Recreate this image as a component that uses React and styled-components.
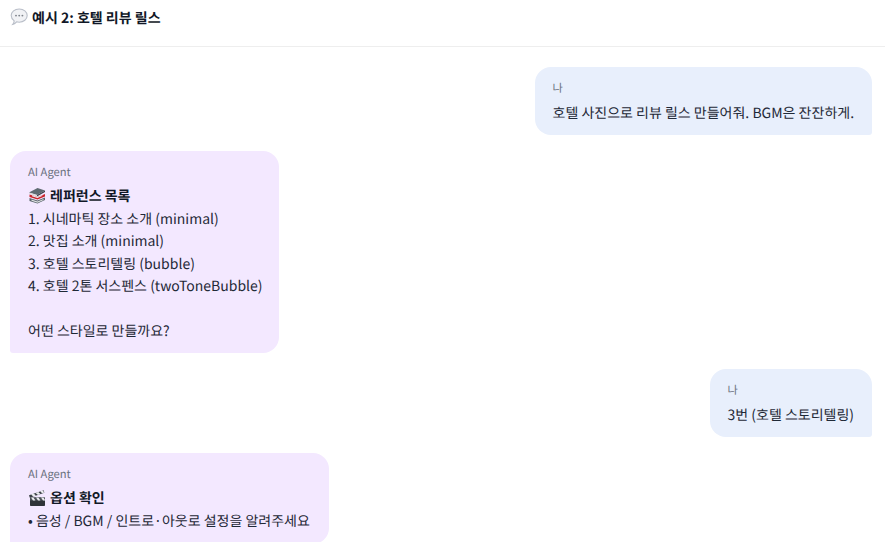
import React from "react";
import styled, { createGlobalStyle } from "styled-components";

const Global = createGlobalStyle`
  html, body { margin: 0; padding: 0; background: #fff; height: 100%; overflow: hidden; }
  body {
    font-family: "Noto Sans CJK KR", "Noto Sans", sans-serif;
    color: #1f2937;
    text-rendering: geometricPrecision;
  }
`;

const Page = styled.div`
  width: 885px;
  height: 542px;
  overflow: hidden;
`;

const Header = styled.header`
  box-sizing: content-box;
  border-bottom: 1px solid #eeeeee;
  padding: 8px 10px 0;
  height: 38px;
  font-size: 14px;
  font-weight: 700;
  line-height: 20px;
  color: #111827;
  display: flex;
  align-items: flex-start;
  gap: 4px;
`;

const Thread = styled.main`
  display: flex;
  flex-direction: column;
  gap: 16px;
  padding: 20px 13px 0 10px;
`;

const Bubble = styled.div`
  box-sizing: border-box;
  width: ${(p) => p.$width}px;
  align-self: ${(p) => (p.$mine ? "flex-end" : "flex-start")};
  background: ${(p) => (p.$mine ? "#e8effc" : "#f3e8ff")};
  border-radius: ${(p) => (p.$mine ? "16px 16px 3px 16px" : "16px 16px 16px 3px")};
  padding: 13px 0 11px ${(p) => (p.$mine ? "17.5px" : "18px")};
  font-size: 14px;
  line-height: 22.4px;
  color: #1f2937;
`;

const Sender = styled.div`
  font-size: 11.2px;
  line-height: 17.6px;
  color: #6b7280;
  margin-bottom: 4px;
`;

const Title = styled.div`
  font-weight: 700;
  color: #111827;
  display: flex;
  align-items: center;
  gap: 4px;
  margin: -1px 0 1px;
`;

const Line = styled.div`
  white-space: pre;
  min-height: 22.4px;
`;

const EmojiSvg = styled.svg`
  width: 18px;
  height: 18px;
  flex: none;
  display: block;
`;

const SpeechEmoji = () => (
  <EmojiSvg viewBox="0 0 18 18" aria-hidden="true">
    <path d="M9.2 1c4.5 0 8 2.900 8 6.600s-3.500 6.600-8 6.600c-.9 0-1.800-.1-2.600-.4-.8 1-2.100 2.200-3.800 2.600.8-.9 1.300-2.100 1.400-3.500C2.300 11.500 1.200 9.700 1.200 7.600 1.200 3.900 4.700 1 9.200 1z" fill="#f1f2f5" stroke="#b9bec8" strokeWidth="1.1" />
    <circle cx="6" cy="7.600" r=".95" fill="#7f848c" />
    <circle cx="9.200" cy="7.600" r=".95" fill="#7f848c" />
    <circle cx="12.400" cy="7.600" r=".95" fill="#7f848c" />
  </EmojiSvg>
);

const BooksEmoji = () => (
  <EmojiSvg viewBox="0 0 18 18" aria-hidden="true">
    <path d="M1 5.500 9.500 1l7.500 2.500-8 4.500z" fill="#5f6b72" />
    <path d="M1 5.500 9 8v1.500L1.500 7z" fill="#d8dbdd" />
    <path d="M9 8l8-4.500v1.600L9 9.500z" fill="#3d474d" />
    <path d="M1.500 7.500 9.500 10l7.500-3v2.400L9.500 12.600 1.500 10z" fill="#c9242b" />
    <path d="M4 8.300 9.500 10l5-2-.4 1-4.700 1.900-5.400-1.700z" fill="#f1f1ef" />
    <path d="M1.500 11 9.500 13.600l7.500-3.200V13l-7.500 3.600L1.500 14z" fill="#59646b" />
    <path d="M3.500 12.600l6 2 6-2.700v1l-6 2.800-6-2z" fill="#dfe2e3" />
  </EmojiSvg>
);

const ClapperEmoji = () => (
  <EmojiSvg viewBox="0 0 18 18" aria-hidden="true">
    <rect x="2" y="8.500" width="15" height="8.500" rx=".8" fill="#2f3338" />
    <path d="M2 8.500h15v3H2z" fill="#4b5056" />
    <path d="M3 8.500h2.400l2 3H5zM8 8.500h2.400l2 3H10zM13 8.500h2.400l1.600 2.500v.5h-2z" fill="#eceef0" />
    <path d="M1 6.200 15.600 1.200l.8 2.600L1.800 8.800z" fill="#3a3f45" />
    <path d="M3 5.500l2.600-.9 2.300 2-2.500.9zM7.600 4l2.600-.9 2.300 2-2.500.9zM12.200 2.300l2.400-.8 1.800 2-2.300.8z" fill="#eceef0" />
  </EmojiSvg>
);

export default function App() {
  return (
    <Page>
      <Global />
      <Header>
        <SpeechEmoji />
        <span>예시 2: 호텔 리뷰 릴스</span>
      </Header>
      <Thread>
        <Bubble $mine $width={337}>
          <Sender>나</Sender>
          <Line>호텔 사진으로 리뷰 릴스 만들어줘. BGM은 잔잔하게.</Line>
        </Bubble>
        <Bubble $width={269}>
          <Sender>AI Agent</Sender>
          <Title>
            <BooksEmoji />
            <span>레퍼런스 목록</span>
          </Title>
          <Line>1. 시네마틱 장소 소개 (minimal)</Line>
          <Line>2. 맛집 소개 (minimal)</Line>
          <Line>3. 호텔 스토리텔링 (bubble)</Line>
          <Line>4. 호텔 2톤 서스펜스 (twoToneBubble)</Line>
          <Line> </Line>
          <Line>어떤 스타일로 만들까요?</Line>
        </Bubble>
        <Bubble $mine $width={162}>
          <Sender>나</Sender>
          <Line>3번 (호텔 스토리텔링)</Line>
        </Bubble>
        <Bubble $width={319}>
          <Sender>AI Agent</Sender>
          <Title>
            <ClapperEmoji />
            <span>옵션 확인</span>
          </Title>
          <Line>• 음성 / BGM / 인트로·아웃로 설정을 알려주세요</Line>
        </Bubble>
      </Thread>
    </Page>
  );
}
